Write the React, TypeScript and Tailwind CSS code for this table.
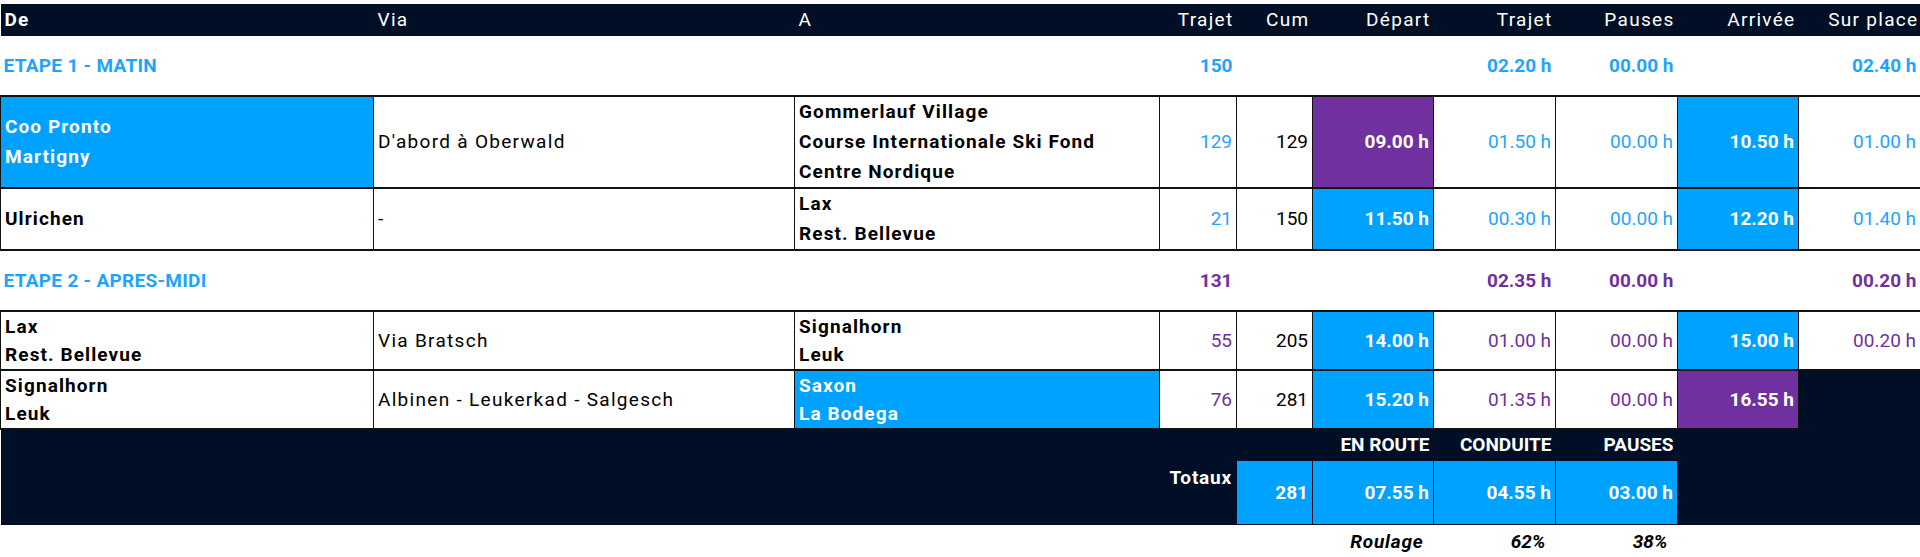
const NAVY = 'bg-[#000f26]';
const BLUE = 'bg-[#00a2ff]';
const PURPLE = 'bg-[#7030a0]';

const td = 'border-x border-y-2 border-[#111] px-[4px] align-middle';
const num = td + ' text-right';
// texte libre : la police de référence est plus large que Roboto en minuscules
const word = 'tracking-[1.3px]';
const strong = 'font-bold tracking-[1.1px]';

function Lines({ items }: { items: string[] }) {
  return (
    <>
      {items.map((t) => (
        <div key={t}>{t}</div>
      ))}
    </>
  );
}

function Hours({ v, tone }: { v: string; tone: 'blue' | 'purple' }) {
  return (
    <td className={num + (tone === 'blue' ? ' text-[#1ea4ff]' : ' text-[#7030a0]')}>{v}</td>
  );
}

function Filled({ v, bg }: { v: string; bg: string }) {
  return <td className={num + ' font-bold text-white ' + bg}>{v}</td>;
}

export default function App() {
  return (
    <div className="w-[1920px] h-[557px] bg-white pt-[4px] overflow-hidden font-['Roboto','Liberation_Sans',sans-serif] text-[19px] leading-[30px] text-black">
      <table className="table-fixed border-collapse w-[1920px]">
        <colgroup>
          <col className="w-[373px]" />
          <col className="w-[421px]" />
          <col className="w-[365px]" />
          <col className="w-[77px]" />
          <col className="w-[76px]" />
          <col className="w-[121px]" />
          <col className="w-[122px]" />
          <col className="w-[122px]" />
          <col className="w-[121px]" />
          <col className="w-[122px]" />
        </colgroup>
        <tbody>
          {/* en-tête */}
          <tr className={'h-[32px] text-white ' + NAVY + ' ' + word}>
            <td className={'px-[4px] ' + strong}>De</td>
            <td className="px-[4px]">Via</td>
            <td className="px-[4px]">A</td>
            <td className="px-[3px] text-right">Trajet</td>
            <td className="px-[3px] text-right">Cum</td>
            <td className="px-[3px] text-right">Départ</td>
            <td className="px-[3px] text-right">Trajet</td>
            <td className="px-[3px] text-right">Pauses</td>
            <td className="px-[3px] text-right">Arrivée</td>
            <td className="px-[2px] text-right">Sur place</td>
          </tr>

          {/* étape 1 */}
          <tr className="h-[60px] font-bold text-[#1ea4ff]">
            <td colSpan={3} className="px-[3px] tracking-[0.3px]">ETAPE 1 - MATIN</td>
            <td className="px-[4px] text-right">150</td>
            <td />
            <td />
            <td className="px-[4px] text-right">02.20 h</td>
            <td className="px-[4px] text-right">00.00 h</td>
            <td />
            <td className="px-[4px] text-right">02.40 h</td>
          </tr>

          <tr className="h-[91px]">
            <td className={td + ' text-white ' + strong + ' ' + BLUE}>
              <Lines items={['Coo Pronto', 'Martigny']} />
            </td>
            <td className={td + ' ' + word}>D'abord à Oberwald</td>
            <td className={td + ' ' + strong}>
              <Lines items={['Gommerlauf Village', 'Course Internationale Ski Fond', 'Centre Nordique']} />
            </td>
            <td className={num + ' text-[#1ea4ff]'}>129</td>
            <td className={num}>129</td>
            <Filled v="09.00 h" bg={PURPLE} />
            <Hours v="01.50 h" tone="blue" />
            <Hours v="00.00 h" tone="blue" />
            <Filled v="10.50 h" bg={BLUE} />
            <Hours v="01.00 h" tone="blue" />
          </tr>

          <tr className="h-[61px]">
            <td className={td + ' ' + strong}>Ulrichen</td>
            <td className={td}>-</td>
            <td className={td + ' ' + strong}>
              <Lines items={['Lax', 'Rest. Bellevue']} />
            </td>
            <td className={num + ' text-[#1ea4ff]'}>21</td>
            <td className={num}>150</td>
            <Filled v="11.50 h" bg={BLUE} />
            <Hours v="00.30 h" tone="blue" />
            <Hours v="00.00 h" tone="blue" />
            <Filled v="12.20 h" bg={BLUE} />
            <Hours v="01.40 h" tone="blue" />
          </tr>

          {/* étape 2 */}
          <tr className="h-[61px] font-bold text-[#7030a0]">
            <td colSpan={3} className="px-[3px] tracking-[0.3px] text-[#1ea4ff]">ETAPE 2 - APRES-MIDI</td>
            <td className="px-[4px] text-right">131</td>
            <td />
            <td />
            <td className="px-[4px] text-right">02.35 h</td>
            <td className="px-[4px] text-right">00.00 h</td>
            <td />
            <td className="px-[4px] text-right">00.20 h</td>
          </tr>

          <tr className="h-[59px] leading-[28px]">
            <td className={td + ' ' + strong}>
              <Lines items={['Lax', 'Rest. Bellevue']} />
            </td>
            <td className={td + ' ' + word}>Via Bratsch</td>
            <td className={td + ' ' + strong}>
              <Lines items={['Signalhorn', 'Leuk']} />
            </td>
            <td className={num + ' text-[#7030a0]'}>55</td>
            <td className={num}>205</td>
            <Filled v="14.00 h" bg={BLUE} />
            <Hours v="01.00 h" tone="purple" />
            <Hours v="00.00 h" tone="purple" />
            <Filled v="15.00 h" bg={BLUE} />
            <Hours v="00.20 h" tone="purple" />
          </tr>

          <tr className="h-[59px] leading-[28px]">
            <td className={td + ' ' + strong}>
              <Lines items={['Signalhorn', 'Leuk']} />
            </td>
            <td className={td + ' ' + word}>Albinen - Leukerkad - Salgesch</td>
            <td className={td + ' text-white ' + strong + ' ' + BLUE}>
              <Lines items={['Saxon', 'La Bodega']} />
            </td>
            <td className={num + ' text-[#7030a0]'}>76</td>
            <td className={num}>281</td>
            <Filled v="15.20 h" bg={BLUE} />
            <Hours v="01.35 h" tone="purple" />
            <Hours v="00.00 h" tone="purple" />
            <Filled v="16.55 h" bg={PURPLE} />
            <td className={NAVY} />
          </tr>

          {/* totaux */}
          <tr className={'h-[31px] font-bold text-white ' + NAVY}>
            <td colSpan={5} />
            <td className="px-[4px] text-right">EN ROUTE</td>
            <td className="px-[4px] text-right">CONDUITE</td>
            <td className="px-[4px] text-right">PAUSES</td>
            <td colSpan={2} />
          </tr>
          <tr className={'h-[64px] font-bold text-white ' + NAVY}>
            <td colSpan={3} />
            <td className="px-[4px] pt-[2px] text-right align-top tracking-[0.8px]">Totaux</td>
            <td className={'border border-[#000f26] px-[4px] text-right ' + BLUE}>281</td>
            <td className={'border border-[#000f26] px-[4px] text-right ' + BLUE}>07.55 h</td>
            <td className={'border border-[#000f26] px-[4px] text-right ' + BLUE}>04.55 h</td>
            <td className={'border border-[#000f26] px-[4px] text-right ' + BLUE}>03.00 h</td>
            <td colSpan={2} />
          </tr>

          <tr className="h-[34px] font-bold italic">
            <td colSpan={5} />
            <td className="pr-[10px] text-right tracking-[0.8px]">Roulage</td>
            <td className="pr-[10px] text-right">62%</td>
            <td className="pr-[10px] text-right">38%</td>
            <td colSpan={2} />
          </tr>
        </tbody>
      </table>
    </div>
  );
}
